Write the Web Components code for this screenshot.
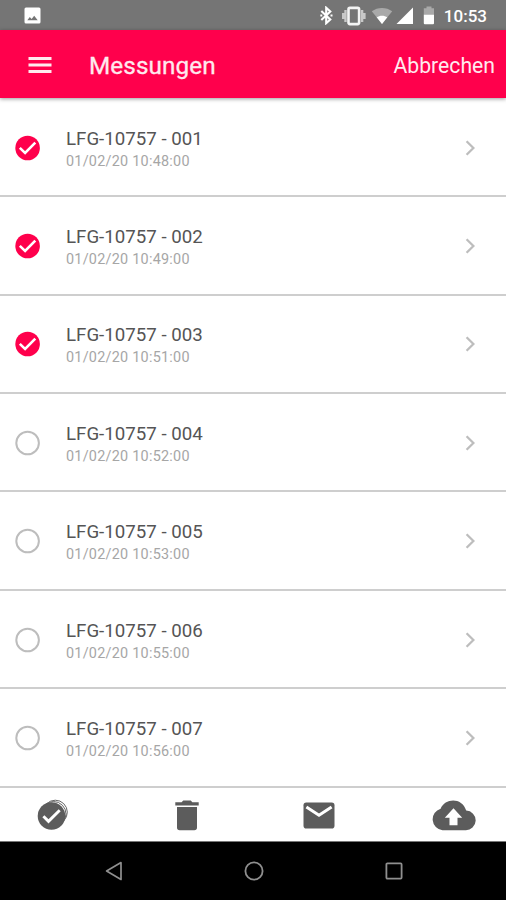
<!DOCTYPE html>
<html lang="de">
<head>
<meta charset="utf-8">
<title>Messungen</title>
<style>
  body {
    margin: 0;
    background: #fff;
    font-family: Roboto, "Liberation Sans", sans-serif;
  }
</style>
</head>
<body>
<mess-app></mess-app>

<script>
// ICONS, drawn in device pixels: [width, height, markup]
const icons = {
  image: [18, 18, '<path fill="#fff" fill-rule="evenodd" d="M2 .5h13a1.500 1.500 0 0 1 1.500 1.500v13a1.500 1.500 0 0 1-1.500 1.500H2A1.500 1.500 0 0 1 .5 15V2A1.500 1.500 0 0 1 2 .5zM3.300 13.300h10.400l-3.500-4.600-2.600 3.200-1.800-2z"/>'],
  bluetooth: [13, 19, '<path fill="none" stroke="#fff" stroke-width="2.100" d="M1.300 5l9 8.500-4.100 3.700V1.700l4.100 3.700-9 8.600"/><path stroke="#fff" stroke-width="2" d="M.3 9.400h2M10.500 9.400h2"/>'],
  vibrate: [24, 20, '<rect x="6.500" y="1.900" width="10.600" height="16.200" rx="1.500" fill="none" stroke="#f4f4f4" stroke-width="2.600"/><path stroke="#c8c8c8" stroke-width="2.400" d="M3.500 4v12M20.100 4v12M1.200 7v6M22.400 7v6"/>'],
  wifi: [22, 18, '<path fill="#a9a9a9" d="M11 17L.8 4.300C6.500-.2 15.500-.2 21.200 4.300z"/><path fill="#fff" d="M11 17L5.700 10.200c3-2.100 7.600-2.100 10.600 0z"/>'],
  signal: [18, 18, '<path fill="#fff" d="M.5 17L17 .5V17z"/>'],
  battery: [12, 19, '<path fill="#a9a9a9" d="M3.500.500h5v1.800H11V9H.8V2.300h2.700z"/><path fill="#fff" d="M.8 8.800H11v8.500a1 1 0 0 1-1 1H1.800a1 1 0 0 1-1-1z"/>'],
  menu: [24, 18, '<path stroke="#ffe9ee" stroke-width="3" d="M.5 2.500h23M.5 9h23M.5 15.400h23"/>'],
  checked: [26, 26, '<circle cx="12.600" cy="13" r="12.300" fill="#ff004c"/><path fill="none" stroke="#fff" stroke-width="2.600" d="M4.800 12.900l5.300 5L20.300 7.700"/>'],
  open: [26, 26, '<circle cx="12.600" cy="13" r="11.300" fill="none" stroke="#bdbdbd" stroke-width="2"/>'],
  chevron: [10, 16, '<path fill="none" stroke="#bdbdbd" stroke-width="2.300" d="M1.600 1.300L8.400 8l-6.800 6.700"/>'],
  all: [32, 32, '<g fill="#fff" stroke="#666" stroke-width="1"><circle cx="18.300" cy="13.200" r="12"/><circle cx="16.500" cy="15" r="12.500"/></g><circle cx="14.500" cy="17" r="13.800" fill="#5c5c5c"/><path fill="none" stroke="#fff" stroke-width="2.900" d="M6.400 17.300l5.100 5.100L22.700 11.200"/>'],
  trash: [24, 31, '<path fill="#5c5c5c" d="M.3 2.200h6.300L8.300.6h7.400l1.700 1.600h6.300v3.200H.3zM2 7h20v20.500a2.700 2.700 0 0 1-2.700 2.700H4.700A2.700 2.700 0 0 1 2 27.500z"/>'],
  mail: [32, 27, '<rect x=".5" y=".5" width="31" height="26" rx="2.800" fill="#5c5c5c"/><path fill="none" stroke="#fff" stroke-width="3" d="M3.400 5L16 13.200 28.600 5"/>'],
  cloud: [45, 31, '<path fill="#5c5c5c" d="M11.500 30.200A11 11 0 0 1 9.600 8.700C14-2 31-3 35.200 10.600A9.800 9.800 0 0 1 34.500 30.200z"/><path fill="#fff" d="M22.500 8.200l8.700 9.500h-4.700v7.500h-8v-7.500h-4.700z"/>'],
  back: [18, 20, '<path fill="none" stroke="#8f8f8f" stroke-width="1.700" stroke-linejoin="round" d="M16 1.600v16.800L1.600 10z"/>'],
  home: [20, 20, '<circle cx="10" cy="10" r="8.600" fill="none" stroke="#8f8f8f" stroke-width="1.800"/>'],
  recent: [18, 18, '<rect x="1.400" y="1.400" width="15.200" height="15.200" rx="1" fill="none" stroke="#8f8f8f" stroke-width="1.800"/>']
};

class messIcon extends HTMLElement {
  static get observedAttributes() {
    return ['name'];
  }
  constructor() {
    super();
    this.attachShadow({ mode: 'open' });
  }
  attributeChangedCallback() {
    const [w, h, body] = icons[this.getAttribute('name')];
    this.shadowRoot.innerHTML = `
      <style>
        :host { display: block; flex: none; width: ${w}px; height: ${h}px; }
        svg { display: block; }
      </style>
      <svg width="${w}" height="${h}" viewBox="0 0 ${w} ${h}">${body}</svg>
    `;
  }
}
window.customElements.define('mess-icon', messIcon);

// ANDROID STATUS BAR
const statusTemplate = document.createElement('template');
statusTemplate.innerHTML = `
  <style>
    :host {
      display: flex;
      align-items: center;
      box-sizing: border-box;
      height: 30px;
      padding: 1px 19px 0 24px;
      background: #757575;
      color: #fff;
    }
    .spacer { flex: 1; }
    .bt { margin-right: 9px; }
    .vib { margin-right: 5px; }
    .wifi { margin-right: 3px; }
    .sig { margin-right: 9px; }
    .bat { margin-right: 9px; }
    .time { font-size: 17px; font-weight: 500; line-height: 20px; }
  </style>
  <mess-icon name="image"></mess-icon>
  <span class="spacer"></span>
  <mess-icon class="bt" name="bluetooth"></mess-icon>
  <mess-icon class="vib" name="vibrate"></mess-icon>
  <mess-icon class="wifi" name="wifi"></mess-icon>
  <mess-icon class="sig" name="signal"></mess-icon>
  <mess-icon class="bat" name="battery"></mess-icon>
  <span class="time"><slot></slot></span>
`;
class statusBar extends HTMLElement {
  constructor() {
    super();
    this.attachShadow({ mode: 'open' });
    this.shadowRoot.appendChild(statusTemplate.content.cloneNode(true));
  }
}
window.customElements.define('status-bar', statusBar);

// RED HEADER
const headerTemplate = document.createElement('template');
headerTemplate.innerHTML = `
  <style>
    :host {
      display: flex;
      align-items: center;
      box-sizing: border-box;
      height: 68px;
      padding: 2px 11px 0 28px;
      background: #ff004c;
      color: #ffe9ee;
      box-shadow: 0 1px 4px rgba(0, 0, 0, 0.4);
      position: relative;
    }
    .title { flex: 1; margin-left: 37px; padding-top: 2px; font-size: 24.3px; line-height: 30px; letter-spacing: 0.1px; -webkit-text-stroke: 0.3px #ffe9ee; }
    .action { padding-top: 2px; font-size: 21.2px; line-height: 30px; }
  </style>
  <mess-icon name="menu"></mess-icon>
  <span class="title"><slot></slot></span>
  <span class="action"><slot name="action"></slot></span>
`;
class appHeader extends HTMLElement {
  constructor() {
    super();
    this.attachShadow({ mode: 'open' });
    this.shadowRoot.appendChild(headerTemplate.content.cloneNode(true));
  }
}
window.customElements.define('app-header', appHeader);

// LIST ROW
const rowTemplate = document.createElement('template');
rowTemplate.innerHTML = `
  <style>
    :host {
      display: flex;
      align-items: center;
      box-sizing: border-box;
      height: 98.43px;
      padding: 0 31px 0 15px;
      border-bottom: 2px solid #cecece;
    }
    .text { flex: 1; margin-left: 25px; padding-top: 6px; }
    .name { font-size: 18.7px; line-height: 23px; color: #555; }
    .date { font-size: 14.4px; line-height: 22px; letter-spacing: 0.25px; color: #a6a6a6; }
    mess-icon { margin-top: 1px; }
  </style>
  <mess-icon name="open"></mess-icon>
  <div class="text">
    <div class="name"><slot></slot></div>
    <div class="date"></div>
  </div>
  <mess-icon name="chevron"></mess-icon>
`;
class messRow extends HTMLElement {
  constructor() {
    super();
    this.attachShadow({ mode: 'open' });
    this.shadowRoot.appendChild(rowTemplate.content.cloneNode(true));
  }
  connectedCallback() {
    this.shadowRoot.querySelector('.date').innerText = this.getAttribute('date');
    if (this.hasAttribute('checked')) {
      this.shadowRoot.querySelector('mess-icon').setAttribute('name', 'checked');
    }
  }
}
window.customElements.define('mess-row', messRow);

// BOTTOM TOOLBAR
const toolsTemplate = document.createElement('template');
toolsTemplate.innerHTML = `
  <style>
    :host {
      display: flex;
      align-items: center;
      justify-content: space-between;
      box-sizing: border-box;
      height: 53px;
      padding: 1px 30px 0 37px;
      background: #fff;
    }
    .trash { margin-left: 1px; }
    .mail { margin-right: -9px; }
  </style>
  <mess-icon name="all"></mess-icon>
  <mess-icon class="trash" name="trash"></mess-icon>
  <mess-icon class="mail" name="mail"></mess-icon>
  <mess-icon name="cloud"></mess-icon>
`;
class toolBar extends HTMLElement {
  constructor() {
    super();
    this.attachShadow({ mode: 'open' });
    this.shadowRoot.appendChild(toolsTemplate.content.cloneNode(true));
  }
}
window.customElements.define('tool-bar', toolBar);

// ANDROID NAVIGATION BAR
const navTemplate = document.createElement('template');
navTemplate.innerHTML = `
  <style>
    :host {
      display: flex;
      align-items: center;
      justify-content: space-between;
      box-sizing: border-box;
      flex: 1;
      padding: 0 103px 0 105px;
      border-top: 1px solid #777;
      background: #000;
    }
  </style>
  <mess-icon name="back"></mess-icon>
  <mess-icon name="home"></mess-icon>
  <mess-icon name="recent"></mess-icon>
`;
class navBar extends HTMLElement {
  constructor() {
    super();
    this.attachShadow({ mode: 'open' });
    this.shadowRoot.appendChild(navTemplate.content.cloneNode(true));
  }
}
window.customElements.define('nav-bar', navBar);

// APP
const appTemplate = document.createElement('template');
appTemplate.innerHTML = `
  <style>
    :host { display: flex; flex-direction: column; height: 900px; overflow: hidden; }
    .list { flex: none; box-sizing: border-box; height: 690px; padding-top: 0.8px; }
    status-bar, app-header, tool-bar { flex: none; }
  </style>
  <status-bar>10:53</status-bar>
  <app-header>Messungen<span slot="action">Abbrechen</span></app-header>
  <div class="list">
    <mess-row date="01/02/20 10:48:00" checked>LFG-10757 - 001</mess-row>
    <mess-row date="01/02/20 10:49:00" checked>LFG-10757 - 002</mess-row>
    <mess-row date="01/02/20 10:51:00" checked>LFG-10757 - 003</mess-row>
    <mess-row date="01/02/20 10:52:00">LFG-10757 - 004</mess-row>
    <mess-row date="01/02/20 10:53:00">LFG-10757 - 005</mess-row>
    <mess-row date="01/02/20 10:55:00">LFG-10757 - 006</mess-row>
    <mess-row date="01/02/20 10:56:00">LFG-10757 - 007</mess-row>
  </div>
  <tool-bar></tool-bar>
  <nav-bar></nav-bar>
`;
class messApp extends HTMLElement {
  constructor() {
    super();
    this.attachShadow({ mode: 'open' });
    this.shadowRoot.appendChild(appTemplate.content.cloneNode(true));
  }
}
window.customElements.define('mess-app', messApp);
</script>
</body>
</html>
